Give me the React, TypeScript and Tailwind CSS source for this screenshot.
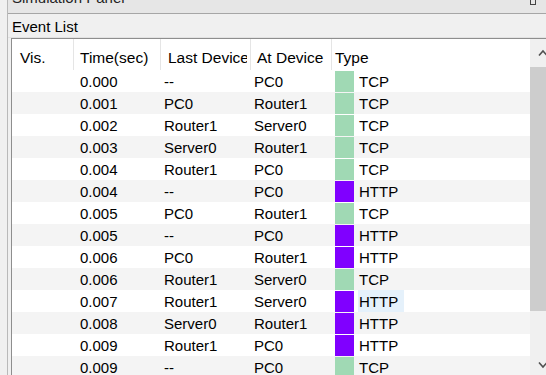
import React from "react";

type Row = { t: string; last: string; at: string; type: "TCP" | "HTTP"; hl?: boolean };

const rows: Row[] = [
  { t: "0.000", last: "--", at: "PC0", type: "TCP" },
  { t: "0.001", last: "PC0", at: "Router1", type: "TCP" },
  { t: "0.002", last: "Router1", at: "Server0", type: "TCP" },
  { t: "0.003", last: "Server0", at: "Router1", type: "TCP" },
  { t: "0.004", last: "Router1", at: "PC0", type: "TCP" },
  { t: "0.004", last: "--", at: "PC0", type: "HTTP" },
  { t: "0.005", last: "PC0", at: "Router1", type: "TCP" },
  { t: "0.005", last: "--", at: "PC0", type: "HTTP" },
  { t: "0.006", last: "PC0", at: "Router1", type: "HTTP" },
  { t: "0.006", last: "Router1", at: "Server0", type: "TCP" },
  { t: "0.007", last: "Router1", at: "Server0", type: "HTTP", hl: true },
  { t: "0.008", last: "Server0", at: "Router1", type: "HTTP" },
  { t: "0.009", last: "Router1", at: "PC0", type: "HTTP" },
  { t: "0.009", last: "--", at: "PC0", type: "TCP" },
];

export default function App() {
  return (
    <div className="w-[546px] h-[375px] overflow-hidden bg-[#f0f0f0] text-[15px] text-black font-['Liberation_Sans',Arial,sans-serif]">
      <div className="ml-[7px] h-full border-l border-[#b9b9b9] flex flex-col">
        {/* Simulation Panel title band (cut off) */}
        <div className="h-[14px] shrink-0 bg-[#e6e6e6] border-b border-[#a6a6a6] overflow-hidden flex justify-between">
          <div className="pl-[4px] leading-[22px] mt-[-13px] text-[#222] whitespace-nowrap">Simulation Panel</div>
          <div className="mr-[10px] mt-[-3px] w-[6px] h-[8px] border border-[#444] border-t-[2px]" />
        </div>
        {/* Event List label */}
        <div className="h-[24px] shrink-0 bg-[#f0f0f0] border-b border-[#e2e2e2] pl-[4px] pt-[2px] leading-[22px]">
          Event List
        </div>
        {/* Table frame */}
        <div className="ml-[3px] flex-1 border-l border-t border-[#8e8e8e] flex bg-white">
          <div className="w-[518px] shrink-0 flex flex-col">
            {/* Header */}
            <div className="h-[31px] shrink-0 grid grid-cols-[62px_87px_90px_81px_1fr] bg-white text-[15.5px]">
              <div className="border-r border-[#e5e5e5] pl-[8px] pt-[8px] leading-[22px]">Vis.</div>
              <div className="border-r border-[#e5e5e5] pl-[6px] pt-[8px] leading-[22px] whitespace-nowrap">Time(sec)</div>
              <div className="border-r border-[#e5e5e5] pl-[7px] pr-[3px] pt-[8px] leading-[22px] whitespace-nowrap overflow-hidden">
                <div className="overflow-hidden whitespace-nowrap">Last Device</div>
              </div>
              <div className="border-r border-[#e5e5e5] pl-[6px] pt-[8px] leading-[22px] whitespace-nowrap overflow-hidden">At Device</div>
              <div className="pl-[3px] pt-[8px] leading-[22px]">Type</div>
            </div>
            {/* Rows */}
            {rows.map((r, i) => (
              <div
                key={i}
                className={
                  "h-[22px] shrink-0 grid grid-cols-[62px_87px_90px_81px_1fr] leading-[22px] " +
                  (i % 2 === 1 ? "bg-[#f4f4f4]" : "bg-white")
                }
              >
                <div />
                <div className="pl-[6px] pt-[1px]">{r.t}</div>
                <div className="pl-[3px] pt-[1px]">{r.last}</div>
                <div className="pl-[3px] pt-[1px]">{r.at}</div>
                <div className="pl-[3px] flex items-stretch">
                  <div
                    className={
                      "w-[19px] my-[1px] shrink-0 " + (r.type === "TCP" ? "bg-[#a0d9b4]" : "bg-[#8000ff]")
                    }
                  />
                  <div className={"ml-[4px] pl-[1px] pr-[6px] pt-[1px] " + (r.hl ? "bg-[#e5f1fb]" : "")}>{r.type}</div>
                </div>
              </div>
            ))}
          </div>
          {/* Scrollbar */}
          <div className="w-[26px] shrink-0 bg-[#f0f0f0] flex flex-col">
            <div className="h-[28px] shrink-0 flex items-center justify-center">
              <svg width="10" height="8" viewBox="0 0 10 8">
                <polyline points="1,6.5 5,2 9,6.5" fill="none" stroke="#505050" strokeWidth="1.6" />
              </svg>
            </div>
            <div className="h-[244px] shrink-0 bg-[#cdcdcd]" />
            <div className="flex-1" />
            <div className="h-[24px] shrink-0 flex items-start justify-center pt-[7px]">
              <svg width="10" height="8" viewBox="0 0 10 8">
                <polyline points="1,1.5 5,6 9,1.5" fill="none" stroke="#505050" strokeWidth="1.6" />
              </svg>
            </div>
          </div>
        </div>
      </div>
    </div>
  );
}
